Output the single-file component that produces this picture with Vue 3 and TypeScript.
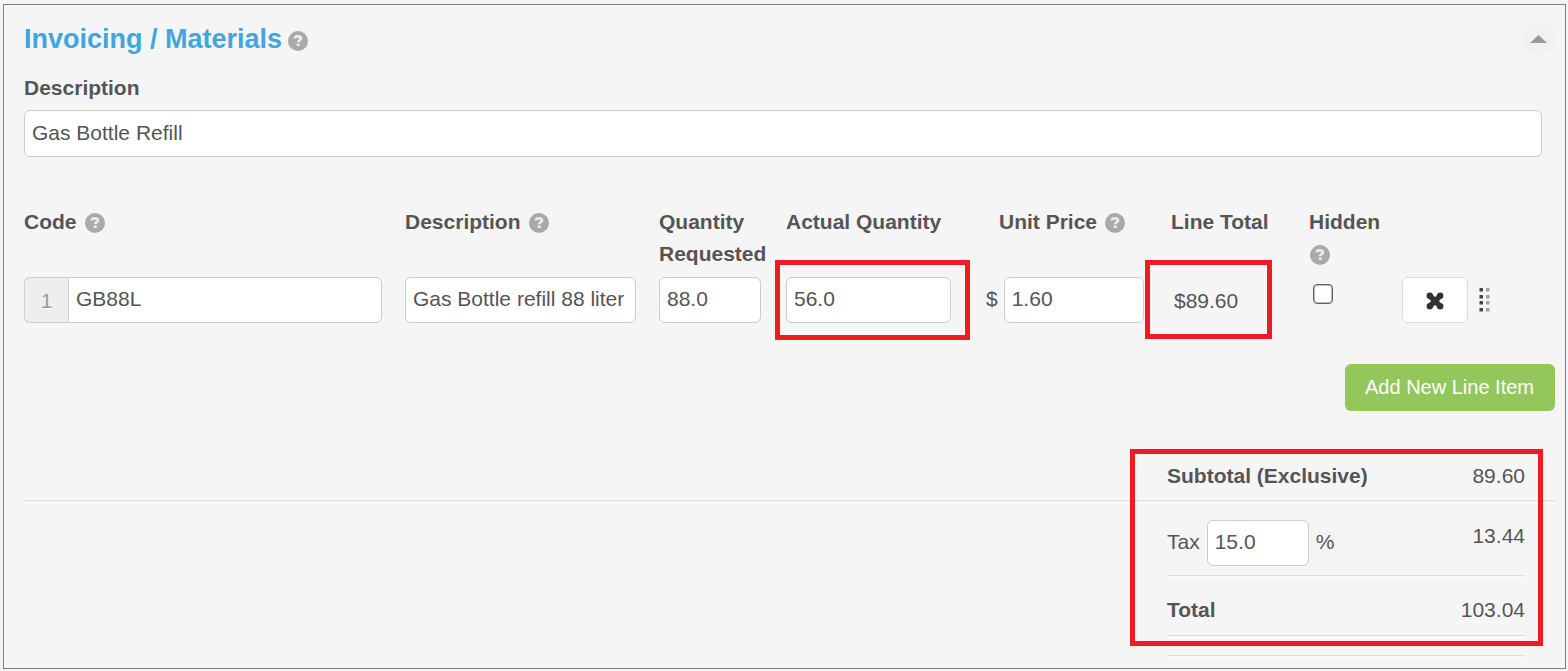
<script setup lang="ts">
import { computed, defineComponent, h, ref } from 'vue'

const HelpIcon = defineComponent({
  name: 'HelpIcon',
  setup: () => () =>
    h('svg', { class: 'help', viewBox: '0 0 20 20', role: 'img', 'aria-label': 'Help' }, [
      h('circle', { cx: 10, cy: 10, r: 10, fill: '#a9a9a9' }),
      h('path', {
        d: 'M7 7.500V7C7 5.700 8.200 5.300 10 5.300S13 6 13 7.400C13 9.200 10.200 9 10.200 11.200',
        fill: 'none',
        stroke: '#ececec',
        'stroke-width': 2.8,
      }),
      h('rect', { x: 8.6, y: 12.6, width: 3.2, height: 2.4, fill: '#ececec' }),
    ]),
})

const description = ref('Gas Bottle Refill')
const code = ref('GB88L')
const itemDescription = ref('Gas Bottle refill 88 liter')
const requested = ref('88.0')
const actual = ref('56.0')
const unitPrice = ref('1.60')
const hidden = ref(false)
const taxRate = ref('15.0')

const lineTotal = computed(() => Number(actual.value) * Number(unitPrice.value))
const tax = computed(() => (lineTotal.value * Number(taxRate.value)) / 100)
const money = (value: number) => value.toFixed(2)
const dotRows = [1, 8, 14, 21]
</script>

<template>
  <main class="panel">
    <header class="head">
      <h1>Invoicing / Materials<HelpIcon /></h1>
      <button class="collapse" type="button" aria-label="Collapse section">
        <svg viewBox="0 0 17 8" width="17" height="8"><path d="M8.500 0L17 8H0z" fill="#999" /></svg>
      </button>
    </header>

    <div class="description">
      <label for="description">Description</label>
      <input id="description" v-model="description" type="text" />
    </div>

    <table class="items">
      <colgroup>
        <col />
        <col class="c-desc" />
        <col class="c-req" />
        <col class="c-actual" />
        <col class="c-price" />
        <col class="c-total" />
        <col class="c-hidden" />
        <col class="c-remove" />
        <col class="c-drag" />
      </colgroup>
      <thead>
        <tr>
          <th id="h-code" scope="col">Code<HelpIcon /></th>
          <th id="h-desc" scope="col">Description<HelpIcon /></th>
          <th id="h-req" scope="col">Quantity Requested</th>
          <th id="h-actual" scope="col">Actual Quantity</th>
          <th id="h-price" class="price-head" scope="col">Unit Price<HelpIcon /></th>
          <th scope="col">Line Total</th>
          <th id="h-hidden" class="hidden-head" scope="col">Hidden <HelpIcon /></th>
          <td></td>
          <td></td>
        </tr>
      </thead>
      <tbody>
        <tr>
          <td>
            <div class="code-group">
              <span class="index">1</span>
              <input v-model="code" type="text" aria-labelledby="h-code" />
            </div>
          </td>
          <td><input v-model="itemDescription" class="w-desc" type="text" aria-labelledby="h-desc" /></td>
          <td><input v-model="requested" class="w-small" type="text" aria-labelledby="h-req" /></td>
          <td>
            <div class="marked marked-quantity">
              <input v-model="actual" type="text" aria-labelledby="h-actual" />
            </div>
          </td>
          <td>
            <div class="price">
              <span>$</span>
              <input v-model="unitPrice" class="w-price" type="text" aria-labelledby="h-price" />
            </div>
          </td>
          <td><div class="marked marked-total">${{ money(lineTotal) }}</div></td>
          <td><input v-model="hidden" class="check" type="checkbox" aria-labelledby="h-hidden" /></td>
          <td>
            <button class="remove" type="button" aria-label="Remove line item">
              <svg viewBox="0 0 18 18" width="18" height="18" fill="#333">
                <path d="M4 4L14 14M14 4L4 14" stroke="#333" stroke-width="5.500" />
                <circle cx="3.800" cy="3.800" r="3.200" />
                <circle cx="14.200" cy="3.800" r="3.200" />
                <circle cx="3.800" cy="14.200" r="3.200" />
                <circle cx="14.200" cy="14.200" r="3.200" />
              </svg>
            </button>
          </td>
          <td>
            <svg class="drag" viewBox="0 0 12 26" width="12" height="26" role="img" aria-label="Drag to reorder">
              <g v-for="y in dotRows" :key="y">
                <rect x="0.500" :y="y" width="3.500" height="3.500" rx="0.500" fill="#444" />
                <rect x="7" :y="y" width="3.500" height="3.500" rx="0.500" fill="#a0a0a0" />
              </g>
            </svg>
          </td>
        </tr>
      </tbody>
    </table>

    <div class="actions">
      <button class="add" type="button">Add New Line Item</button>
    </div>

    <section class="totals" aria-label="Totals">
      <div class="row subtotal">
        <strong>Subtotal (Exclusive)</strong>
        <span>{{ money(lineTotal) }}</span>
      </div>
      <div class="rule wide"></div>
      <div class="row tax">
        <div class="tax-field">
          <label for="tax">Tax</label>
          <input id="tax" v-model="taxRate" class="w-small" type="text" />
          <span>%</span>
        </div>
        <span>{{ money(tax) }}</span>
      </div>
      <div class="rule"></div>
      <div class="row total">
        <strong>Total</strong>
        <span>{{ money(lineTotal + tax) }}</span>
      </div>
      <div class="rule"></div>
      <div class="rule last"></div>
      <div class="outline"></div>
    </section>
  </main>
</template>

<style>
body {
  background: #f4f4f4;
}
</style>

<style scoped>
* {
  box-sizing: border-box;
}

.panel {
  margin: 4px 2px 2px 3px;
  padding: 18px 10px 10px 20px;
  border: 1px solid #808080;
  background: #f5f5f5;
  color: #555;
  font: 21px/32px "Liberation Sans", Arial, sans-serif;
}

.head {
  display: flex;
  justify-content: space-between;
  align-items: center;
  height: 32px;
}

h1 {
  margin: 0;
  color: #42a6dc;
  font-size: 27px;
  line-height: 32px;
}

:deep(.help) {
  display: inline-block;
  width: 20px;
  height: 20px;
  margin-left: 8px;
  vertical-align: -4px;
}

h1 :deep(.help) {
  margin-left: 6px;
  vertical-align: -3px;
}

.hidden-head :deep(.help) {
  margin-left: 1px;
}

button,
input {
  font: inherit;
  color: inherit;
}

.collapse {
  display: grid;
  place-items: center;
  width: 33px;
  height: 33px;
  padding: 0;
  border: 0;
  border-radius: 50%;
  background: #f1f1f1;
  box-shadow: 0 1px 0 #fafafa;
}

.description {
  margin: 17px 13px 0 0;
}

.description label {
  display: block;
  margin-bottom: 6px;
  font-weight: bold;
}

input[type='text'] {
  display: block;
  width: 100%;
  height: 46px;
  padding: 0 7px 2px;
  border: 1px solid #ccc;
  border-radius: 6px;
  background: #fff;
}

.description input[type='text'] {
  height: 47px;
}

.items {
  width: calc(100% - 13px);
  margin-top: 49px;
  border-collapse: collapse;
  table-layout: fixed;
}

.c-desc { width: 254px; }
.c-req { width: 127px; }
.c-actual { width: 200px; }
.c-price { width: 185px; }
.c-total { width: 138px; }
.c-hidden { width: 93px; }
.c-remove { width: 77px; }
.c-drag { width: 63px; }

th,
td {
  padding: 0;
  text-align: left;
  vertical-align: top;
}

th {
  padding-bottom: 7px;
}

.price-head {
  padding-left: 13px;
}

.code-group {
  display: flex;
  margin-right: 23px;
}

.index {
  flex: none;
  width: 44px;
  height: 46px;
  border: 1px solid #ccc;
  border-right: 0;
  border-radius: 6px 0 0 6px;
  background: #eee;
  color: #999;
  line-height: 46px;
  text-align: center;
  text-shadow: 0 1px 0 #fff;
}

.code-group input[type='text'] {
  border-radius: 0 6px 6px 0;
}

input.w-desc[type='text'] { width: 231px; }
input.w-small[type='text'] { width: 102px; }
input.w-price[type='text'] { width: 140px; }

.price {
  display: flex;
  gap: 6px;
  line-height: 44px;
}

.marked {
  position: relative;
  height: 46px;
}

.marked::after,
.outline {
  position: absolute;
  border: 5px solid #ed1c24;
  content: '';
  pointer-events: none;
}

.marked-quantity {
  width: 165px;
}

.marked-quantity::after {
  inset: -17px -19px -17px -11px;
}

.marked-total {
  width: 101px;
  padding-left: 3px;
  line-height: 48px;
}

.marked-total::after {
  inset: -17px 0 -16px -26px;
}

.check {
  display: block;
  width: 20px;
  height: 20px;
  margin: 7px 0 0 4px;
  border: 1px solid #606060;
  border-radius: 4px;
  background: #fff;
  box-shadow: inset 0 0 0 1px #bbb;
  appearance: none;
}

.check:checked {
  background: #555;
}

.remove {
  display: grid;
  place-items: center;
  width: 66px;
  height: 46px;
  padding: 2px 0 0;
  border: 1px solid #ddd;
  border-radius: 6px;
  background: #fff;
}

.drag {
  display: block;
  margin-top: 10px;
}

.actions {
  display: flex;
  justify-content: flex-end;
  margin: 41px 0;
}

.add {
  height: 47px;
  padding: 0 21px 2px 20px;
  border: 0;
  border-radius: 6px;
  background: #93c75c;
  color: #fff;
  font-size: 20px;
}

.totals {
  position: relative;
}

.row {
  display: flex;
  justify-content: space-between;
  width: 358px;
  margin: 0 30px 0 auto;
}

.subtotal {
  padding: 8px 0;
}

.tax {
  padding: 16px 0 9px;
}

.tax-field {
  display: flex;
  gap: 7px;
  line-height: 44px;
}

.total {
  padding: 16px 0 9px;
}

.rule {
  width: 358px;
  height: 3px;
  margin: 0 30px 0 auto;
  border-top: 1px solid #ddd;
  border-bottom: 1px solid #fff;
}

.rule.wide {
  width: auto;
  height: 4px;
  margin: 0;
}

.rule.last {
  margin-top: 17px;
}

.outline {
  top: -3px;
  right: 12px;
  width: 413px;
  height: 197px;
}
</style>
